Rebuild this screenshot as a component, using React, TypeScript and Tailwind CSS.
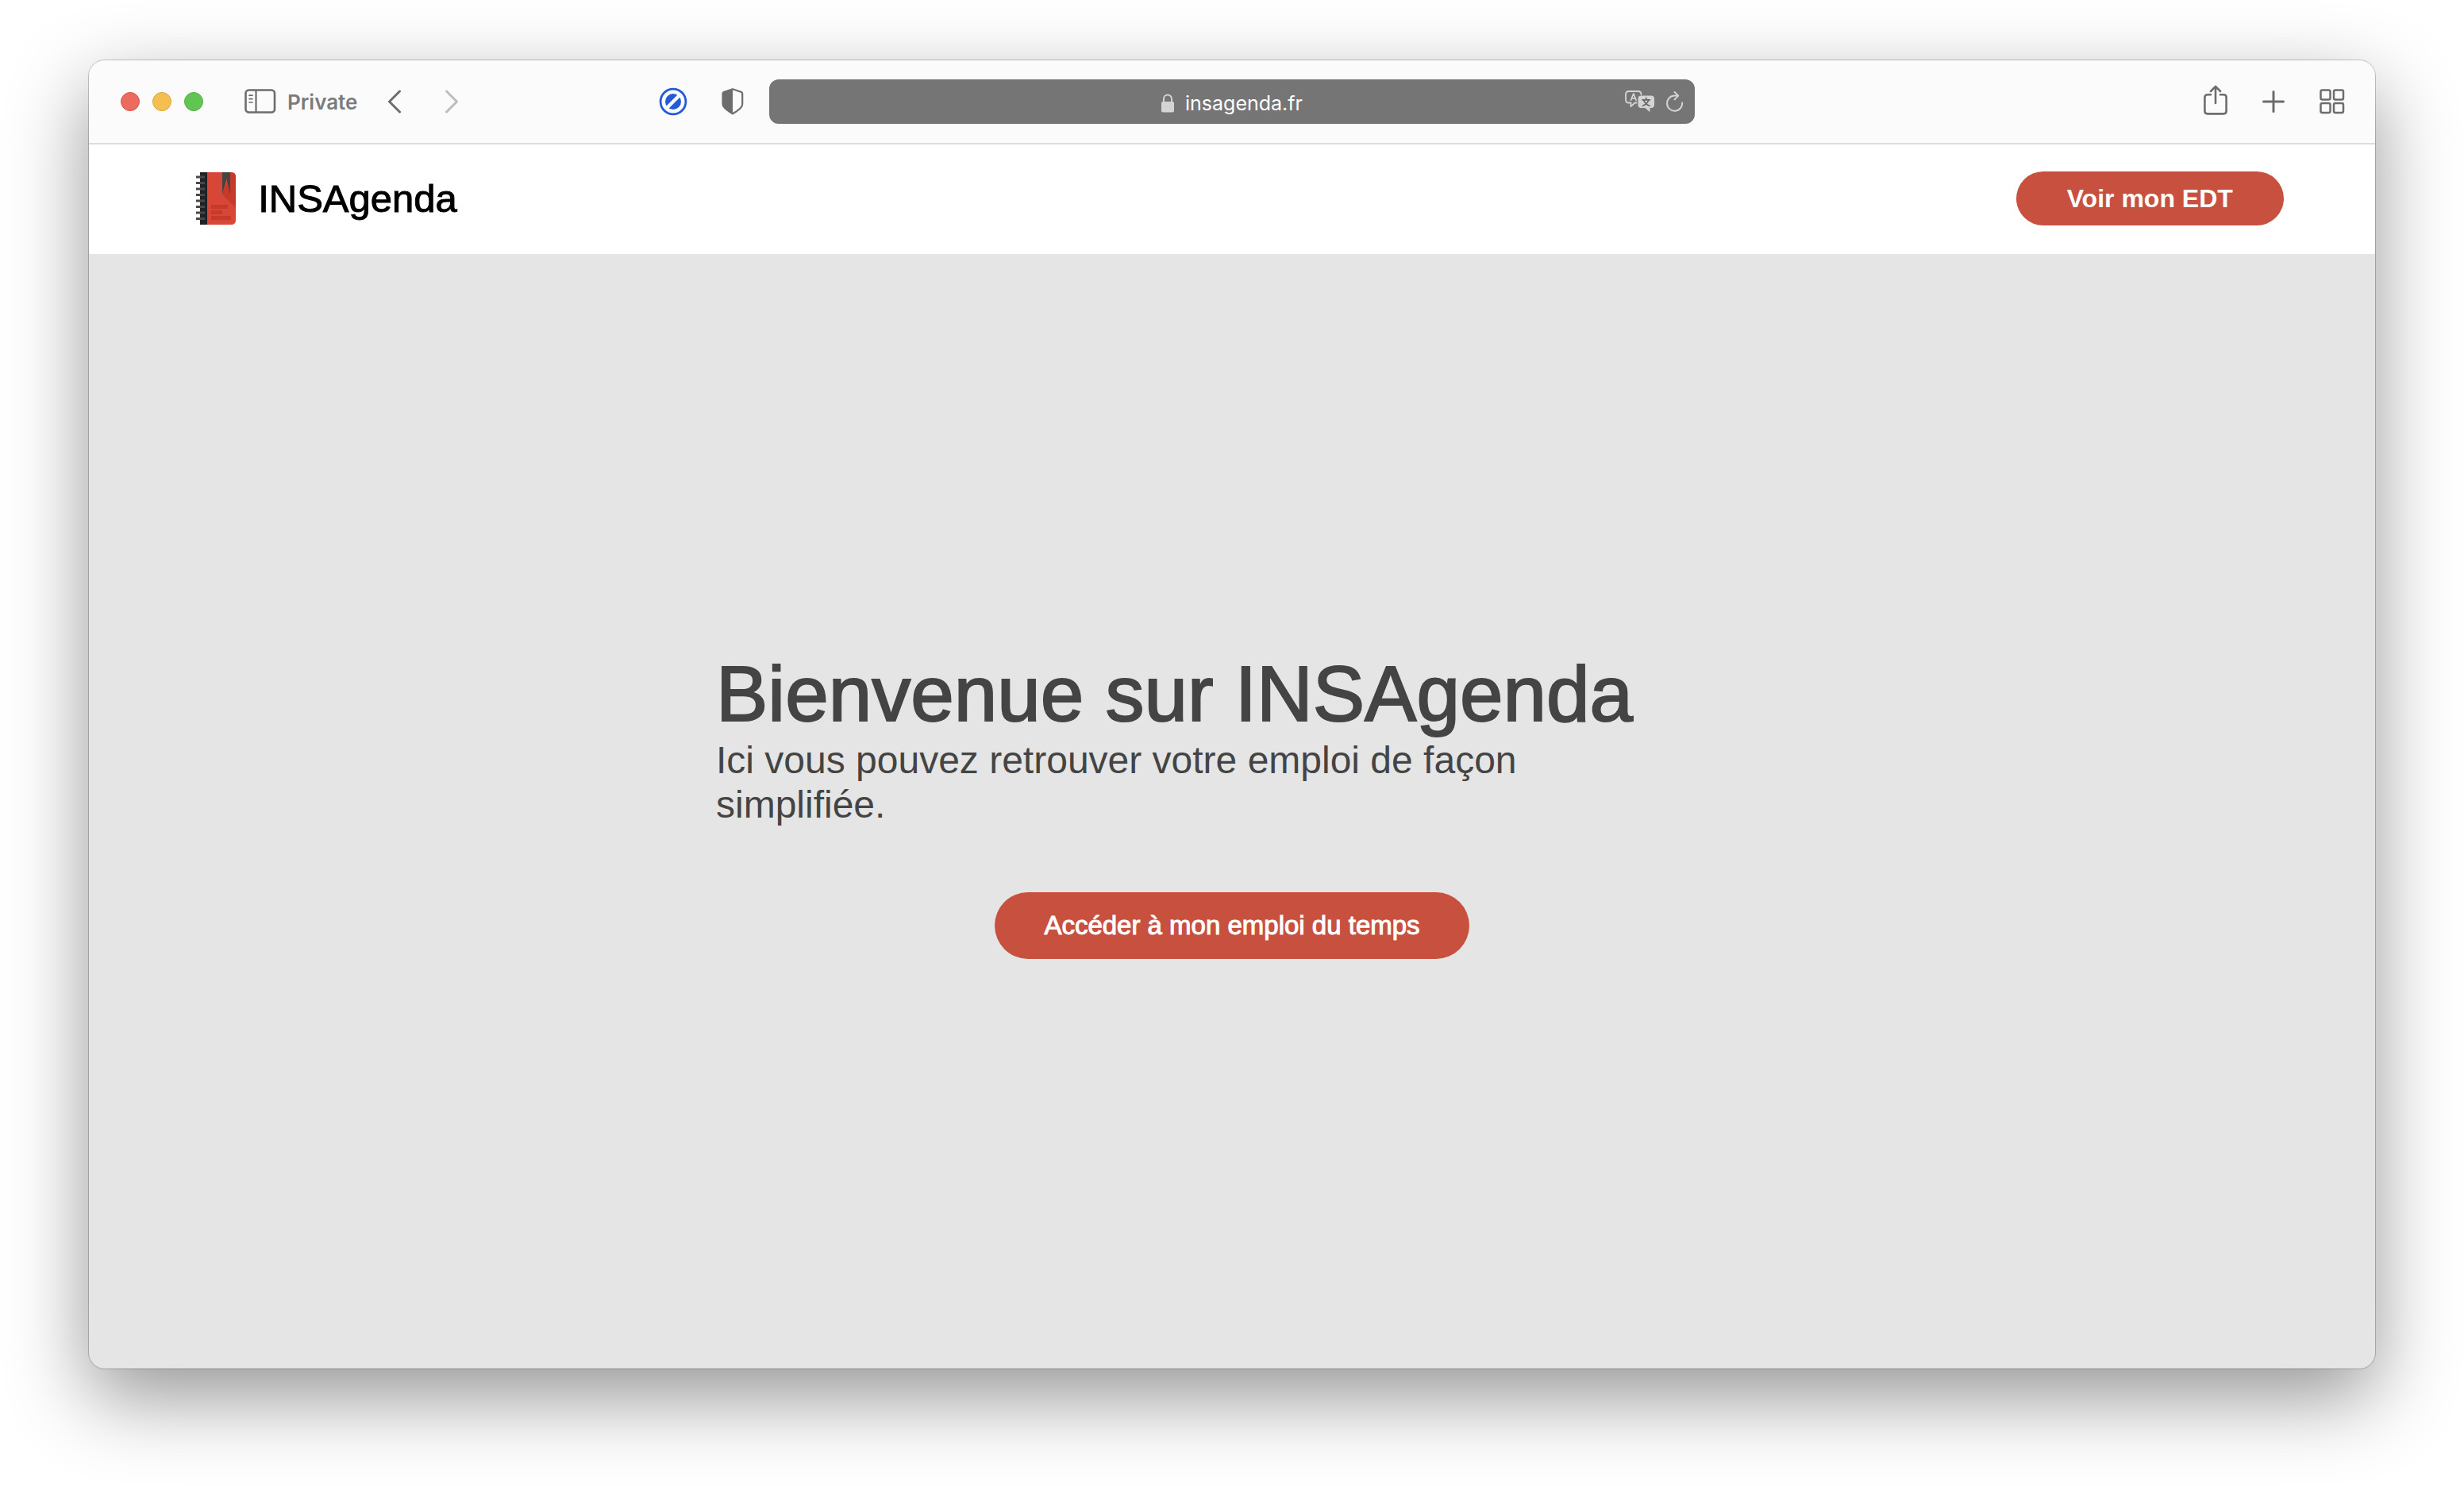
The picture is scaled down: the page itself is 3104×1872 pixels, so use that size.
import React from "react";

function SidebarIcon() {
  return (
    <svg width="40" height="32" viewBox="0 0 40 32" fill="none" stroke="#6d6d6d" strokeLinecap="round">
      <rect x="1.5" y="1.5" width="36.5" height="28" rx="4" strokeWidth="2.6" />
      <path d="M14.5 2v27" strokeWidth="2.2" />
      <path d="M6 8.2h4M6 12.6h4M6 17h4" strokeWidth="1.7" />
    </svg>
  );
}

function Chevron({ direction }: { direction: "left" | "right" }) {
  return (
    <svg
      width="18"
      height="30"
      viewBox="0 0 18 30"
      fill="none"
      stroke={direction === "left" ? "#6d6d6d" : "#bdbdbd"}
      strokeWidth="3"
      strokeLinecap="round"
      strokeLinejoin="round"
    >
      <path d={direction === "left" ? "M15.5 2L2.5 15l13 13" : "M2.5 2l13 13-13 13"} />
    </svg>
  );
}

function BlockerIcon() {
  return (
    <svg width="36" height="36" viewBox="0 0 36 36" fill="none">
      <circle cx="18" cy="18" r="15.9" stroke="#2459d9" strokeWidth="2.8" />
      <circle cx="18" cy="18" r="10" fill="#2459d9" />
      <path d="M9.500 26.500L26.500 9.500" stroke="#fbfbfb" strokeWidth="4.500" />
    </svg>
  );
}

function ShieldIcon() {
  return (
    <svg width="28" height="34" viewBox="0 0 28 34" fill="none">
      <path
        d="M14 1.2L25 5q1.200.6 1.200 2v13q0 3-2.400 5.200Q20 28.800 14 32.300 8 28.800 4.200 25.200 1.500 23 1.500 20V7q0-1.400 1.200-2z"
        stroke="#6d6d6d"
        strokeWidth="2.2"
        strokeLinejoin="round"
      />
      <path d="M14 1v31.500Q8 29 4 25.200 1 22.600 1 20V7q0-1.500 1.500-2z" fill="#6d6d6d" />
    </svg>
  );
}

function LockIcon() {
  return (
    <svg width="16" height="24" viewBox="0 0 16 24" fill="none">
      <rect x="0" y="10" width="16" height="13.5" rx="2" fill="#d4d4d4" />
      <path d="M3 11V6.500a5 5 0 0 1 10 0V11" stroke="#d4d4d4" strokeWidth="1.9" />
    </svg>
  );
}

function TranslateIcon() {
  return (
    <svg width="38" height="28" viewBox="0 0 38 28" fill="none" strokeLinecap="round" strokeLinejoin="round">
      <path
        d="M14.500 15.500h-2L7.500 20.200V15.500H5Q1 15.500 1 11.500V5q0-4 4-4h11.500q4 0 4 4"
        stroke="#d4d4d4"
        strokeWidth="1.8"
      />
      <path d="M7.500 12.200L10.800 4l3.300 8.200M8.700 9.800h4.200" stroke="#d4d4d4" strokeWidth="1.7" />
      <path
        d="M20.500 6.500H33q4 0 4 4V18q0 4-4 4h-1.500v4.200q0 1-.9.3L25.500 22h-5q-4 0-4-4v-7.500q0-4 4-4z"
        fill="#d4d4d4"
      />
      <path
        d="M22 11.800h9.500M26.700 9.300v2.500M23.600 12q1.800 5 7.400 7.300M29.900 12q-1.800 5-7.400 7.300"
        stroke="#666666"
        strokeWidth="1.7"
      />
    </svg>
  );
}

function ReloadIcon() {
  return (
    <svg
      width="22"
      height="26"
      viewBox="0 0 22 26"
      fill="none"
      stroke="#d4d4d4"
      strokeWidth="2"
      strokeLinecap="round"
      strokeLinejoin="round"
    >
      <path d="M20.200 14.500A9.600 9.600 0 1 1 10.500 5.500h4" />
      <path d="M10.500 1l4.800 4.600-4.800 4.800" />
    </svg>
  );
}

function ShareIcon() {
  return (
    <svg
      width="30"
      height="38"
      viewBox="0 0 30 38"
      fill="none"
      stroke="#6d6d6d"
      strokeWidth="2.6"
      strokeLinecap="round"
      strokeLinejoin="round"
    >
      <path d="M9 12.200H5q-3.600 0-3.600 3.600v17q0 3.600 3.600 3.600h20q3.600 0 3.600-3.600v-17q0-3.600-3.600-3.600h-4" />
      <path d="M15 23V2M9 8l6-6.200L21 8" />
    </svg>
  );
}

function PlusIcon() {
  return (
    <svg width="28" height="28" viewBox="0 0 28 28" stroke="#6d6d6d" strokeWidth="3" strokeLinecap="round">
      <path d="M14 1.500v25M1.500 14h25" />
    </svg>
  );
}

function GridIcon() {
  return (
    <svg width="32" height="32" viewBox="0 0 32 32" fill="none" stroke="#6d6d6d" strokeWidth="2.5">
      <rect x="1.5" y="1.5" width="12" height="12" rx="2" />
      <rect x="18" y="1.5" width="12" height="12" rx="2" />
      <rect x="1.5" y="18" width="12" height="12" rx="2" />
      <rect x="18" y="18" width="12" height="12" rx="2" />
    </svg>
  );
}

const ringRows = [6, 13.5, 21, 28.5, 36, 43.5, 51, 58.5];

function NotebookLogo() {
  return (
    <svg width="50" height="66" viewBox="0 0 50 66">
      <path d="M14 0h30q6 0 6 6v54q0 6-6 6H14z" fill="#d84637" />
      <path d="M43 0h1q6 0 6 6v39L33 28z" fill="#c63a2b" />
      <path d="M5 0h9v66H5z" fill="#222" />
      <path d="M33 0h10v28L38.500 8 33 28z" fill="#444" />
      {ringRows.map((y) => (
        <path key={y} d={`M0 ${y}h11`} stroke="#484848" strokeWidth="3" />
      ))}
      <path d="M19 41h21v5H19zM19 48h14v5H19zM19 55h25v5H19z" fill="#c63a2b" />
    </svg>
  );
}

function BrowserToolbar() {
  return (
    <div className="grid h-[106px] grid-cols-[1fr_40.5%_1fr] items-center border-b-2 border-[#dddddd] bg-[#fbfbfb] font-['Inter',sans-serif]">
      <div className="flex items-center justify-between pr-8 pl-10">
        <div className="flex items-center">
          <div className="flex gap-4">
            <button aria-label="Close" className="size-6 rounded-full border border-[#d5564c] bg-[#ed6a5e]" />
            <button aria-label="Minimize" className="size-6 rounded-full border border-[#d9a53f] bg-[#f5bf4f]" />
            <button aria-label="Zoom" className="size-6 rounded-full border border-[#55b045] bg-[#61c554]" />
          </div>
          <button className="ml-[52px] flex items-center gap-[14px] text-[26px] leading-8 font-semibold text-[#7b7b7b]">
            <SidebarIcon />
            <span className="pt-0.5">Private</span>
          </button>
          <button aria-label="Back" className="ml-[38px]">
            <Chevron direction="left" />
          </button>
          <button aria-label="Forward" className="ml-[54px]" disabled>
            <Chevron direction="right" />
          </button>
        </div>
        <div className="flex items-center gap-[43px]">
          <button aria-label="Content blocker">
            <BlockerIcon />
          </button>
          <button aria-label="Privacy report">
            <ShieldIcon />
          </button>
        </div>
      </div>
      <div className="grid h-14 grid-cols-[1fr_auto_1fr] items-center rounded-xl bg-[#757575] px-[14px] text-white">
        <button className="col-start-2 flex items-center gap-[14px] pt-[3px] text-[25px] leading-8">
          <LockIcon />
          insagenda.fr
        </button>
        <div className="flex items-center justify-end gap-[14px]">
          <button aria-label="Translate">
            <TranslateIcon />
          </button>
          <button aria-label="Reload">
            <ReloadIcon />
          </button>
        </div>
      </div>
      <div className="flex items-center justify-end gap-11 pr-[38px]">
        <button aria-label="Share" className="pb-1">
          <ShareIcon />
        </button>
        <button aria-label="New tab">
          <PlusIcon />
        </button>
        <button aria-label="Tab overview">
          <GridIcon />
        </button>
      </div>
    </div>
  );
}

export default function App() {
  return (
    <div className="flex min-h-screen flex-col bg-white px-28 pt-[76px] pb-[148px] font-['Liberation_Sans',Arial,sans-serif]">
      <div className="flex flex-1 flex-col overflow-hidden rounded-[20px] bg-[#e5e5e5] shadow-[0_0_0_1px_rgba(0,0,0,0.2),0_36px_100px_rgba(0,0,0,0.42)]">
        <BrowserToolbar />
        <header className="flex h-[138px] items-center justify-between bg-white px-[4%] pb-[3px]">
          <a
            href="#accueil"
            className="ml-5 flex items-center gap-7 text-[49px] leading-14 text-black [-webkit-text-stroke:1px_#000]"
          >
            <NotebookLogo />
            INSAgenda
          </a>
          <button className="h-[68px] rounded-full bg-[#c8503f] px-16 text-[32px] leading-9 font-bold text-white">
            Voir mon EDT
          </button>
        </header>
        <main className="flex flex-1 items-center justify-center pb-[18px] text-[#444444]">
          <div className="flex w-[1300px] flex-col">
            <h1 className="text-[98px] leading-[112px] [-webkit-text-stroke:2px_#444444]">Bienvenue sur INSAgenda</h1>
            <p className="max-w-[1200px] text-[48px] leading-14">
              Ici vous pouvez retrouver votre emploi de façon simplifiée.
            </p>
            <button className="mt-[82px] h-[84px] self-center rounded-full bg-[#c8503f] px-[62px] text-[33px] leading-9 text-white [-webkit-text-stroke:1px_#fff]">
              Accéder à mon emploi du temps
            </button>
          </div>
        </main>
      </div>
    </div>
  );
}
